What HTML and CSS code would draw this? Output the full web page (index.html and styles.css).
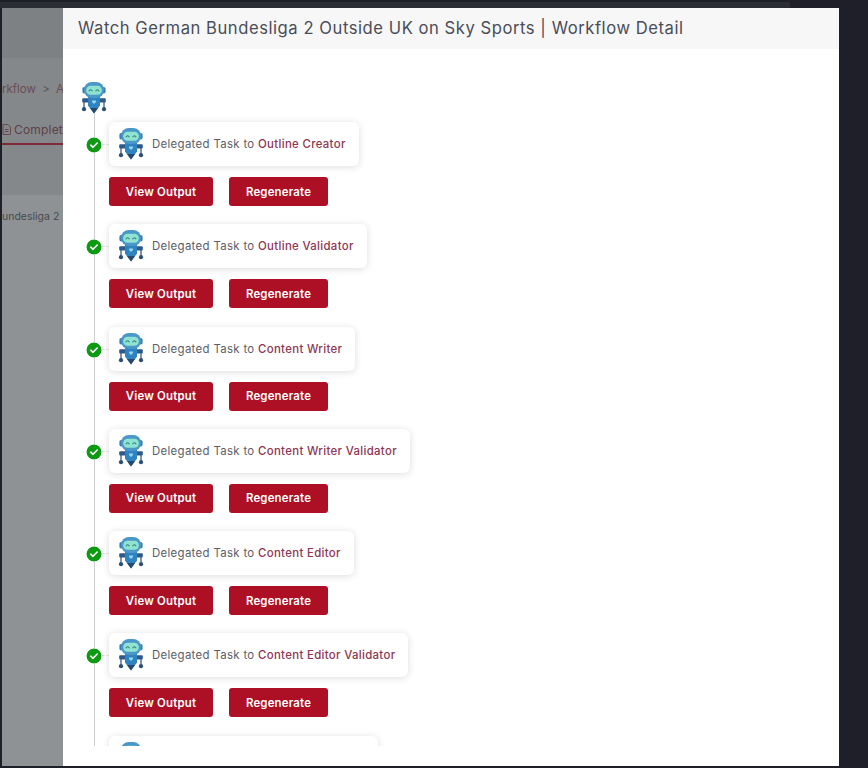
FILE: index.html
```html
<!DOCTYPE html>
<html lang="en">
<head>
<meta charset="utf-8">
<title>Workflow Detail</title>
<link rel="stylesheet" href="styles.css">
</head>
<body>
<svg class="defs" width="0" height="0" aria-hidden="true">
  <symbol id="robot" viewBox="0 0 26 32">
    <path d="M6 18.2 H3 V26" fill="none" stroke="#2c4f74" stroke-width="1.2"/>
    <path d="M20 18.2 H23 V26" fill="none" stroke="#2c4f74" stroke-width="1.2"/>
    <circle cx="3" cy="27.2" r="2.1" fill="#2c4f74"/>
    <circle cx="23" cy="27.2" r="2.1" fill="#2c4f74"/>
    <rect x="1.2" y="16.2" width="6.5" height="4.2" rx="1" fill="#2c5a8a"/>
    <rect x="18.3" y="16.2" width="6.5" height="4.2" rx="1" fill="#2c5a8a"/>
    <path d="M7 15 H19 V23.5 L13 31.5 L7 23.5 Z" fill="#2f83c0"/>
    <path d="M9 26 H17 L13 31.5 Z" fill="#27496d"/>
    <path d="M11 18.5 H15 V20 L13 22 L11 20 Z" fill="#8fd8ea"/>
    <rect x="1.4" y="5" width="3.4" height="6.5" rx="1.7" fill="#3b7fb2"/>
    <rect x="21.2" y="5" width="3.4" height="6.5" rx="1.7" fill="#3b7fb2"/>
    <rect x="3" y="0" width="20" height="16" rx="7.8" fill="#4a97c9"/>
    <rect x="5.2" y="3.8" width="15.6" height="9" rx="4.3" fill="#8fe3d0"/>
    <path d="M7.8 9.2 Q9.6 6.2 11.4 9.2 M14.6 9.2 Q16.4 6.2 18.2 9.2" fill="none" stroke="#2a7d74" stroke-width="1.1"/>
  </symbol>
  <symbol id="check" viewBox="0 0 16 16">
    <circle cx="8" cy="8" r="7.5" fill="#0c9a12"/>
    <path d="M4.8 8.2 L7 10.3 L11.2 6" fill="none" stroke="#fff" stroke-width="1.6" stroke-linecap="round" stroke-linejoin="round"/>
  </symbol>
</svg>
<div class="screen">
  <div class="backdrop">
    <div class="crumbs">rkflow <span class="crumb-sep">&gt;</span> A</div>
    <div class="tab">
      <svg class="tab-icon" width="9" height="11" viewBox="0 0 9 11"><path d="M1 .5 H6 L8.5 3 V10.5 H1 Z M3 5.5 H6.5 M3 7.5 H6.5" fill="none" stroke="#6a4a50" stroke-width="1"/></svg>
      <span>Complet</span>
    </div>
    <div class="row-name">undesliga 2</div>
  </div>
  <main class="modal">
    <h1 class="modal-title">Watch German Bundesliga 2 Outside UK on Sky Sports | Workflow Detail</h1>
    <div class="modal-body">
      <svg class="root-robot" width="26" height="32"><use href="#robot"/></svg>
      <div class="timeline">
        <section class="step">
          <div class="task">
            <svg class="tick" width="16" height="16"><use href="#check"/></svg>
            <span class="dash"></span>
            <div class="card"><svg class="card-robot" width="26" height="32"><use href="#robot"/></svg><p class="label">Delegated Task to <b>Outline Creator</b></p></div>
          </div>
          <div class="actions"><button class="btn btn-view">View Output</button><button class="btn btn-regen">Regenerate</button></div>
        </section>
        <section class="step">
          <div class="task">
            <svg class="tick" width="16" height="16"><use href="#check"/></svg>
            <span class="dash"></span>
            <div class="card"><svg class="card-robot" width="26" height="32"><use href="#robot"/></svg><p class="label">Delegated Task to <b>Outline Validator</b></p></div>
          </div>
          <div class="actions"><button class="btn btn-view">View Output</button><button class="btn btn-regen">Regenerate</button></div>
        </section>
        <section class="step">
          <div class="task">
            <svg class="tick" width="16" height="16"><use href="#check"/></svg>
            <span class="dash"></span>
            <div class="card"><svg class="card-robot" width="26" height="32"><use href="#robot"/></svg><p class="label">Delegated Task to <b>Content Writer</b></p></div>
          </div>
          <div class="actions"><button class="btn btn-view">View Output</button><button class="btn btn-regen">Regenerate</button></div>
        </section>
        <section class="step">
          <div class="task">
            <svg class="tick" width="16" height="16"><use href="#check"/></svg>
            <span class="dash"></span>
            <div class="card"><svg class="card-robot" width="26" height="32"><use href="#robot"/></svg><p class="label">Delegated Task to <b>Content Writer Validator</b></p></div>
          </div>
          <div class="actions"><button class="btn btn-view">View Output</button><button class="btn btn-regen">Regenerate</button></div>
        </section>
        <section class="step">
          <div class="task">
            <svg class="tick" width="16" height="16"><use href="#check"/></svg>
            <span class="dash"></span>
            <div class="card"><svg class="card-robot" width="26" height="32"><use href="#robot"/></svg><p class="label">Delegated Task to <b>Content Editor</b></p></div>
          </div>
          <div class="actions"><button class="btn btn-view">View Output</button><button class="btn btn-regen">Regenerate</button></div>
        </section>
        <section class="step">
          <div class="task">
            <svg class="tick" width="16" height="16"><use href="#check"/></svg>
            <span class="dash"></span>
            <div class="card"><svg class="card-robot" width="26" height="32"><use href="#robot"/></svg><p class="label">Delegated Task to <b>Content Editor Validator</b></p></div>
          </div>
          <div class="actions"><button class="btn btn-view">View Output</button><button class="btn btn-regen">Regenerate</button></div>
        </section>
        <section class="step">
          <div class="task">
            <div class="card card-clipped"><svg class="card-robot" width="26" height="32"><use href="#robot"/></svg></div>
          </div>
        </section>
      </div>
    </div>
  </main>
</div>
</body>
</html>
```
FILE: styles.css
```css
* { box-sizing: border-box; }
html, body { margin: 0; height: 100%; }
body {
  background: linear-gradient(#2a2d34, #2a2d34) 0 2px / 790px 6px no-repeat, #1e1f28;
  font-family: Inter, "Open Sans", sans-serif;
  overflow: hidden;
}
.defs { position: absolute; }
.screen {
  display: flex;
  height: 768px;
  padding: 8px 29px 2px 2px;
}
.backdrop {
  width: 61px;
  flex: none;
  overflow: hidden;
  white-space: nowrap;
  background: linear-gradient(#7e8184 0, #7e8184 50px, #85888b 50px, #85888b 187px, #8f9295 187px);
  color: #5f4a50;
  font-size: 11.5px;
}
.crumbs {
  margin-top: 74px;
  height: 14px;
  line-height: 14px;
  color: #6b4c52;
}
.crumb-sep { margin: 0 3px; color: #5a5055; }
.tab {
  display: flex;
  align-items: center;
  gap: 3px;
  margin-top: 21px;
  height: 28px;
  padding-bottom: 2px;
  border-bottom: 2px solid #7f2a35;
  color: #5e4048;
  font-size: 12px;
  letter-spacing: .2px;
}
.row-name {
  margin-top: 65px;
  color: #464a4e;
  font-size: 10.5px;
}
.modal {
  width: 776px;
  flex: none;
  background: #fff;
  height: 758px;
  overflow: hidden;
}
.modal-title {
  margin: 0;
  height: 41px;
  padding: 0 15px;
  background: #f7f7f7;
  color: #4a4d58;
  font-weight: 400;
  font-size: 16.6px;
  line-height: 40px;
  letter-spacing: .55px;
  white-space: nowrap;
}
.modal-body {
  display: flex;
  flex-direction: column;
  padding: 33px 0 0 18px;
  height: 697px;
  overflow: hidden;
}
.root-robot { display: block; flex: none; }
.timeline {
  flex: none;
  height: 633px;
  width: 500px;
  overflow: hidden;
  padding: 8px 0 0 28px;
  background: linear-gradient(#cfcfcf, #cfcfcf) 12.5px 0 / 1px 100% no-repeat;
}
.step { display: flex; flex-direction: column; height: 102.3px; }
.task { position: relative; display: flex; }
.tick { position: absolute; left: -23px; top: 15px; background: #fff; border-radius: 50%; }
.dash {
  position: absolute;
  left: -7px;
  top: 22px;
  width: 7px;
  border-top: 1px dashed #d8d8d8;
}
.card {
  display: flex;
  align-items: center;
  gap: 8px;
  height: 44px;
  padding: 0 13px 0 9px;
  background: #fff;
  border-radius: 6px;
  box-shadow: 0 1px 7px rgba(40, 40, 60, .16);
}
.card-clipped { width: 269px; }
.card-robot { flex: none; }
.label {
  margin: 0;
  color: #5a5d68;
  font-size: 11.4px;
  letter-spacing: .33px;
  white-space: nowrap;
}
.label b { font-weight: 500; color: #8f3553; }
.actions { display: flex; gap: 16px; margin-top: 11px; }
.btn {
  height: 29px;
  border: 0;
  border-radius: 3px;
  background: #ad0f24;
  color: #fff;
  font-family: inherit;
  font-size: 11.4px;
  font-weight: 600;
  letter-spacing: .2px;
  padding: 0;
}
.btn-view { width: 104px; }
.btn-regen { width: 99px; }
```
